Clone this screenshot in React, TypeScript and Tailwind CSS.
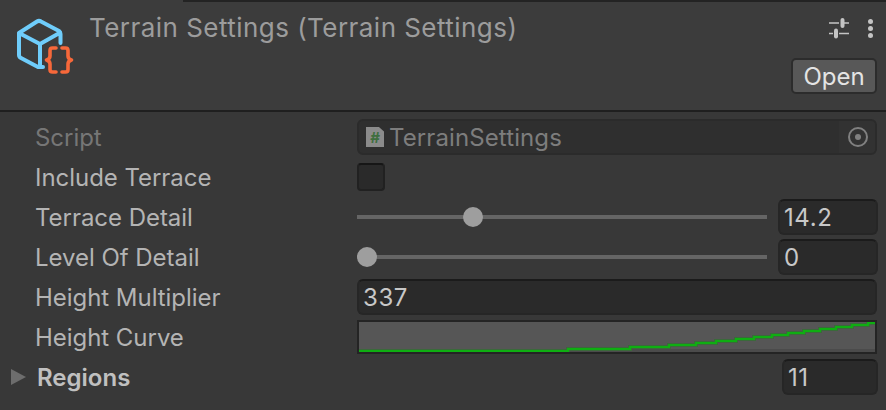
import React from "react";

const CubeIcon = () => (
  <svg width="64" height="60" viewBox="0 0 64 60" fill="none" className="shrink-0">
    <path
      d="M4 16 L22 4.5 Q24 3.2 26 4.5 L44 14 Q45.5 15 45.5 17 V26 M4 16 V38 Q4 40 6 41 L23 50 H28 M4 16 L25 27 L44.5 16 M25 27 V50"
      stroke="#6fcdfb"
      strokeWidth="4"
      strokeLinecap="round"
      strokeLinejoin="round"
    />
    <path
      d="M41 31 H37.5 Q35 31 35 33.5 V39 Q35 42 31.5 43 Q35 44 35 47 V52.5 Q35 55 37.5 55 H41 M47 31 H50.5 Q53 31 53 33.5 V39 Q53 42 56.5 43 Q53 44 53 47 V52.5 Q53 55 50.5 55 H47"
      stroke="#f7683a"
      strokeWidth="3.6"
      strokeLinecap="round"
      strokeLinejoin="round"
    />
  </svg>
);

const SlidersIcon = () => (
  <svg width="21" height="21" viewBox="0 0 21 21" fill="none" className="shrink-0">
    <path d="M0 5 H10 M15 5 H20 M0 15.5 H4 M10 15.5 H20" stroke="#c4c4c4" strokeWidth="1.6" />
    <rect x="11.5" y="0" width="4" height="10" rx="2" fill="#c4c4c4" />
    <rect x="5" y="10.5" width="4" height="10" rx="2" fill="#c4c4c4" />
  </svg>
);

const NumberField = ({ value, className = "" }: { value: string; className?: string }) => (
  <div
    className={`flex h-[36px] items-center rounded-[6px] border-2 border-[#262626] border-t-[#1b1b1b] bg-[#2a2a2a] pl-[4px] pt-[2px] tracking-[0.6px] text-[#c8c8c8] ${className}`}
  >
    {value}
  </div>
);

const Slider = ({ left, value }: { left: string; value: string }) => (
  <div className="flex flex-1 items-center gap-[11px]">
    <div className="relative h-[4px] flex-1 bg-[#656565]">
      <div
        className="absolute top-1/2 h-[20px] w-[20px] -translate-y-1/2 rounded-full bg-[#9e9e9e]"
        style={{ left }}
      />
    </div>
    <NumberField value={value} className="-mr-px w-[100px]" />
  </div>
);

const Row = ({ label, children, muted }: { label: string; children: React.ReactNode; muted?: boolean }) => (
  <div className="flex h-10 items-center pr-[9px]">
    <div
      className={`w-[357px] shrink-0 pl-[35px] pt-[1px] tracking-[-0.04px] ${muted ? "text-[#767676]" : "text-[#b4b4b4]"}`}
    >
      {label}
    </div>
    {children}
  </div>
);

const steps: [number, number][] = [
  [568, 352],
  [630, 350],
  [669, 348],
  [696, 346],
  [716, 344],
  [736, 342],
  [754, 340],
  [772, 338],
  [788, 336],
  [804, 334],
  [820, 332],
  [836, 330],
  [852, 328],
  [868, 326],
  [875, 324],
];

const curvePoints = () => {
  let x0 = 359;
  const pts: string[] = [];
  steps.forEach(([x, y]) => {
    pts.push(`${x0 - 359},${y - 323}`, `${x - 359},${y - 323}`);
    x0 = x;
  });
  return pts.join(" ");
};

const App = () => {
  return (
    <div
      className="h-[410px] w-[886px] overflow-hidden bg-[#383838] text-[24px] leading-none"
      style={{ fontFamily: "Inter, 'Noto Sans', sans-serif" }}
    >
      <header className="relative flex h-[112px] border-b-2 border-[#1f1f1f] bg-[#3c3c3c]">
        <div className="absolute left-[183px] right-0 top-0 h-[2px] bg-[#232323]" />
        <div className="pl-[15px] pt-[17px]">
          <CubeIcon />
        </div>
        <div className="flex-1 pl-[10px] pt-[15px] text-[26px] tracking-[0.46px] text-[#9c9c9c]">
          Terrain Settings (Terrain Settings)
        </div>
        <div className="flex flex-col items-end pr-[9px] pt-[18px]">
          <div className="flex h-[21px] items-center gap-[18px] pr-[4px]">
            <SlidersIcon />
            <div className="flex flex-col gap-[2px]">
              <span className="h-[5px] w-[5px] rounded-full bg-[#c4c4c4]" />
              <span className="h-[5px] w-[5px] rounded-full bg-[#c4c4c4]" />
              <span className="h-[5px] w-[5px] rounded-full bg-[#c4c4c4]" />
            </div>
          </div>
          <button className="mt-[19px] flex h-[36px] w-[86px] items-center justify-center rounded-[5px] border-2 border-[#2c2c2c] bg-[#585858] pt-[1px] text-[#e4e4e4]">
            Open
          </button>
        </div>
      </header>

      <main className="pt-[5px]">
        <Row label="Script" muted>
          <div className="flex h-[36px] flex-1 items-center rounded-[6px] border-2 border-[#2b2b2b] bg-[#2f2f2f] pl-[7px] text-[#7d7d7d]">
            <span className="flex h-[20px] w-[18px] items-center justify-center bg-[#8b8b8b] text-[15px] font-bold text-[#3f6f3f] [clip-path:polygon(0_0,72%_0,100%_22%,100%_100%,0_100%)]">
              #
            </span>
            <span className="flex-1 pl-[5px] pt-[1px] tracking-[0.1px]">TerrainSettings</span>
            <span className="flex h-full w-[36px] items-center justify-center rounded-r-[4px] bg-[#323232] pl-[1px]">
              <span className="flex h-[20px] w-[20px] items-center justify-center rounded-full border-2 border-[#808080]">
                <span className="h-[6px] w-[6px] rounded-full bg-[#808080]" />
              </span>
            </span>
          </div>
        </Row>
        <Row label="Include Terrace">
          <div className="h-[28px] w-[28px] rounded-[4px] border-2 border-[#212121] border-t-[#161616] bg-[#2a2a2a]" />
        </Row>
        <Row label="Terrace Detail">
          <Slider left="106px" value="14.2" />
        </Row>
        <Row label="Level Of Detail">
          <Slider left="0px" value="0" />
        </Row>
        <Row label="Height Multiplier">
          <NumberField value="337" className="flex-1" />
        </Row>
        <Row label="Height Curve">
          <div className="flex h-[34px] flex-1 border-2 border-[#242424] bg-[#565656]">
            <svg width="516" height="30" viewBox="0 0 516 30" fill="none">
              <rect x="209" y="27" width="307" height="3" fill="#4b4b4b" />
              <polyline points={curvePoints()} stroke="#3a6a3a" strokeWidth="4" shapeRendering="crispEdges" />
              <polyline points={curvePoints()} stroke="#0fae12" strokeWidth="2" shapeRendering="crispEdges" />
            </svg>
          </div>
        </Row>
        <div className="flex h-10 items-center pr-[9px]">
          <span className="ml-[11px] h-0 w-0 border-y-[8px] border-l-[15px] border-y-transparent border-l-[#6d6d6d]" />
          <span className="flex-1 pl-[11px] pt-[1px] font-semibold text-[#c0c0c0]">Regions</span>
          <NumberField value="11" className="-mr-px w-[96px]" />
        </div>
      </main>
    </div>
  );
};

export default App;
